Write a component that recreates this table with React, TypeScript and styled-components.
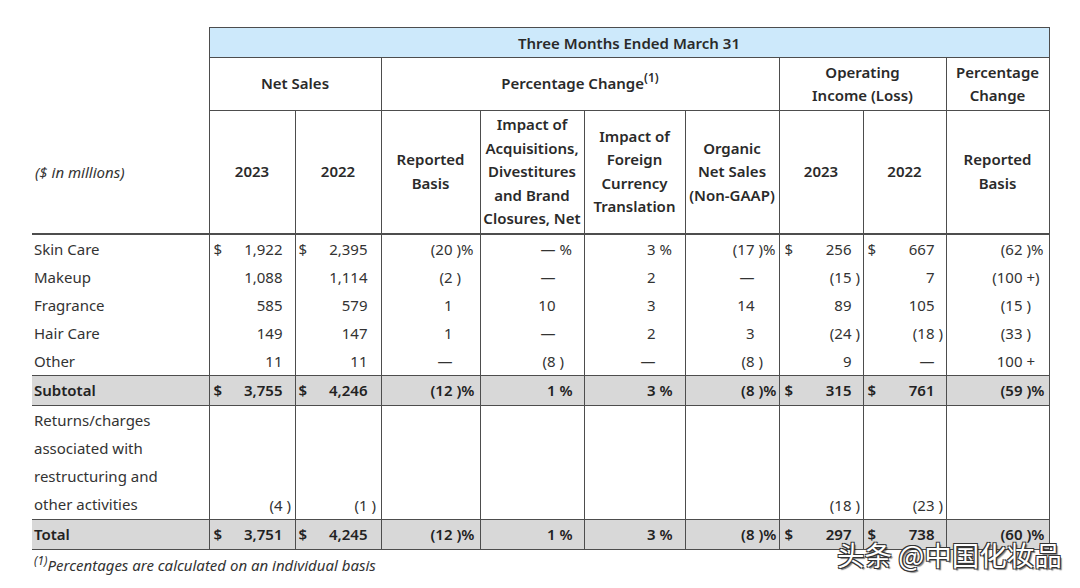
import React from "react";
import styled, { createGlobalStyle, css } from "styled-components";

const GlobalStyle = createGlobalStyle`
  html, body { margin: 0; padding: 0; background: #ffffff; }
  body { font-family: "Noto Sans", "Open Sans", sans-serif; color: #333333; }
`;

const LINE = "#4d4d4d";
const BAND = "#d8d8d8";
const BLUE = "#cde9fb";

const Page = styled.div`
  position: relative;
  width: 1080px;
  height: 588px;
  box-sizing: border-box;
  padding: 27px 0 0 32px;
  overflow: hidden;
`;

const Table = styled.table`
  border-collapse: collapse;
  table-layout: fixed;
  width: 1017px;
  font-size: 15px;
`;

const HeadRow = styled.tr<{ $h: number }>`
  height: ${(p) => p.$h}px;
`;

const BlankHead = styled.td`
  padding: 0;
  border: none;
`;

const UnitsHead = styled.td`
  padding: 0 0 0 3px;
  border: none;
  border-bottom: 2px solid ${LINE};
  font-style: italic;
  vertical-align: middle;
  text-align: left;
`;

const HeadCell = styled.th<{ $blue?: boolean; $last?: boolean }>`
  padding: 0 2px;
  border: 1px solid ${LINE};
  font-weight: 600;
  color: #2a2a2a;
  text-align: center;
  vertical-align: middle;
  line-height: 23.5px;
  ${(p) =>
    p.$blue &&
    css`
      background: ${BLUE};
      line-height: 20px;
    `}
  ${(p) =>
    p.$last &&
    css`
      border-bottom: 2px solid ${LINE};
    `}
`;

const Sup = styled.sup`
  font-size: 12px;
  line-height: 0;
  vertical-align: 7px;
`;

const BodyRow = styled.tr<{ $h: number; $band?: boolean }>`
  height: ${(p) => p.$h}px;
  ${(p) =>
    p.$band &&
    css`
      background: ${BAND};
      font-weight: 600;
      color: #222222;
    `}
`;

const LabelCell = styled.td<{ $band?: boolean }>`
  padding: 0 0 0 2px;
  border: none;
  line-height: 28px;
  vertical-align: middle;
  text-align: left;
  white-space: nowrap;
  ${(p) =>
    p.$band &&
    css`
      border-top: 1px solid ${LINE};
      border-bottom: 1px solid ${LINE};
    `}
`;

const NumTd = styled.td<{ $band?: boolean; $bottom?: boolean }>`
  padding: 0;
  border-left: 1px solid ${LINE};
  border-right: 1px solid ${LINE};
  vertical-align: ${(p) => (p.$bottom ? "bottom" : "middle")};
  ${(p) =>
    p.$band &&
    css`
      border-top: 1px solid ${LINE};
      border-bottom: 1px solid ${LINE};
    `}
`;

const NumBox = styled.div<{ $pl: number; $pr: number }>`
  display: flex;
  align-items: baseline;
  line-height: 28px;
  padding-left: ${(p) => p.$pl}px;
  padding-right: ${(p) => p.$pr}px;
  white-space: pre;
`;

const Dollar = styled.span`
  margin-right: auto;
`;

const Num = styled.span`
  margin-left: auto;
  text-align: right;
`;

const Suffix = styled.span<{ $w: number }>`
  flex: 0 0 ${(p) => p.$w}px;
  width: ${(p) => p.$w}px;
  text-align: left;
`;

const Footnote = styled.div`
  margin: 3px 0 0 2px;
  font-size: 15px;
  font-style: italic;
  color: #333333;
  line-height: 24px;
`;

const FootSup = styled.sup`
  font-size: 12px;
  line-height: 0;
  vertical-align: 6px;
`;

const Watermark = styled.div`
  position: absolute;
  left: 837px;
  top: 536px;
  font-family: "Noto Sans CJK SC", "Noto Sans", sans-serif;
  font-size: 27.5px;
  line-height: 36px;
  color: #ffffff;
  white-space: nowrap;
  text-shadow: 1px 1px 0 #333, -1px -1px 0 #333, 1px -1px 0 #333,
    -1px 1px 0 #333, 2px 2px 1px rgba(0, 0, 0, 0.5);
`;

type Cell = [string, string, string];

const COLS = [
  { sw: 11, pr: 1, pl: 4 },
  { sw: 11, pr: 2, pl: 3 },
  { sw: 22, pr: 5, pl: 4 },
  { sw: 20, pr: 8, pl: 4 },
  { sw: 20, pr: 9, pl: 4 },
  { sw: 22, pr: 2, pl: 4 },
  { sw: 10, pr: 1, pl: 5 },
  { sw: 10, pr: 1, pl: 4 },
  { sw: 22, pr: 4, pl: 4 },
];

const D = "—";

type Row = { label: React.ReactNode; cells: Cell[]; band?: boolean; h: number; bottom?: boolean };

const ROWS: Row[] = [
  {
    label: "Skin Care",
    h: 28,
    cells: [
      ["$", "1,922", ""], ["$", "2,395", ""], ["", "(20", " )%"], ["", D, " %"], ["", "3", " %"],
      ["", "(17", " )%"], ["$", "256", ""], ["$", "667", ""], ["", "(62", " )%"],
    ],
  },
  {
    label: "Makeup",
    h: 28,
    cells: [
      ["", "1,088", ""], ["", "1,114", ""], ["", "(2", " )"], ["", D, ""], ["", "2", ""],
      ["", D, ""], ["", "(15", " )"], ["", "7", ""], ["", "(100", " +)"],
    ],
  },
  {
    label: "Fragrance",
    h: 28,
    cells: [
      ["", "585", ""], ["", "579", ""], ["", "1", ""], ["", "10", ""], ["", "3", ""],
      ["", "14", ""], ["", "89", ""], ["", "105", ""], ["", "(15", " )"],
    ],
  },
  {
    label: "Hair Care",
    h: 28,
    cells: [
      ["", "149", ""], ["", "147", ""], ["", "1", ""], ["", D, ""], ["", "2", ""],
      ["", "3", ""], ["", "(24", " )"], ["", "(18", " )"], ["", "(33", " )"],
    ],
  },
  {
    label: "Other",
    h: 28,
    cells: [
      ["", "11", ""], ["", "11", ""], ["", D, ""], ["", "(8", " )"], ["", D, ""],
      ["", "(8", " )"], ["", "9", ""], ["", D, ""], ["", "100", " +"],
    ],
  },
  {
    label: "Subtotal",
    h: 30,
    band: true,
    cells: [
      ["$", "3,755", ""], ["$", "4,246", ""], ["", "(12", " )%"], ["", "1", " %"], ["", "3", " %"],
      ["", "(8", " )%"], ["$", "315", ""], ["$", "761", ""], ["", "(59", " )%"],
    ],
  },
  {
    label: (
      <>
        Returns/charges
        <br />
        associated with
        <br />
        restructuring and
        <br />
        other activities
      </>
    ),
    h: 114,
    bottom: true,
    cells: [
      ["", "(4", " )"], ["", "(1", " )"], ["", "", ""], ["", "", ""], ["", "", ""],
      ["", "", ""], ["", "(18", " )"], ["", "(23", " )"], ["", "", ""],
    ],
  },
  {
    label: "Total",
    h: 30,
    band: true,
    cells: [
      ["$", "3,751", ""], ["$", "4,245", ""], ["", "(12", " )%"], ["", "1", " %"], ["", "3", " %"],
      ["", "(8", " )%"], ["$", "297", ""], ["$", "738", ""], ["", "(60", " )%"],
    ],
  },
];

const WIDTHS = [177, 86, 86, 99, 104, 101, 94, 84, 83, 103];

function NumberCell({ cell, idx, band, bottom }: { cell: Cell; idx: number; band?: boolean; bottom?: boolean }) {
  const c = COLS[idx];
  const [dollar, num, suffix] = cell;
  return (
    <NumTd $band={band} $bottom={bottom}>
      <NumBox $pl={c.pl} $pr={c.pr}>
        {dollar && <Dollar>{dollar}</Dollar>}
        <Num>{num}</Num>
        <Suffix $w={c.sw}>{suffix}</Suffix>
      </NumBox>
    </NumTd>
  );
}

export default function App() {
  return (
    <>
      <GlobalStyle />
      <Page>
        <Table>
          <colgroup>
            {WIDTHS.map((w, i) => (
              <col key={i} style={{ width: w }} />
            ))}
          </colgroup>
          <thead>
            <HeadRow $h={30}>
              <BlankHead />
              <HeadCell $blue colSpan={9}>
                Three Months Ended March 31
              </HeadCell>
            </HeadRow>
            <HeadRow $h={53}>
              <BlankHead />
              <HeadCell colSpan={2}>Net Sales</HeadCell>
              <HeadCell colSpan={4}>
                Percentage Change<Sup>(1)</Sup>
              </HeadCell>
              <HeadCell colSpan={2}>
                Operating
                <br />
                Income (Loss)
              </HeadCell>
              <HeadCell>
                Percentage
                <br />
                Change
              </HeadCell>
            </HeadRow>
            <HeadRow $h={123}>
              <UnitsHead>($ in millions)</UnitsHead>
              <HeadCell $last>2023</HeadCell>
              <HeadCell $last>2022</HeadCell>
              <HeadCell $last>
                Reported
                <br />
                Basis
              </HeadCell>
              <HeadCell $last>
                Impact of
                <br />
                Acquisitions,
                <br />
                Divestitures
                <br />
                and Brand
                <br />
                Closures, Net
              </HeadCell>
              <HeadCell $last>
                Impact of
                <br />
                Foreign
                <br />
                Currency
                <br />
                Translation
              </HeadCell>
              <HeadCell $last>
                Organic
                <br />
                Net Sales
                <br />
                (Non-GAAP)
              </HeadCell>
              <HeadCell $last>2023</HeadCell>
              <HeadCell $last>2022</HeadCell>
              <HeadCell $last>
                Reported
                <br />
                Basis
              </HeadCell>
            </HeadRow>
          </thead>
          <tbody>
            {ROWS.map((r, ri) => (
              <BodyRow key={ri} $h={r.h} $band={r.band}>
                <LabelCell $band={r.band}>{r.label}</LabelCell>
                {r.cells.map((c, ci) => (
                  <NumberCell key={ci} cell={c} idx={ci} band={r.band} bottom={r.bottom} />
                ))}
              </BodyRow>
            ))}
          </tbody>
        </Table>
        <Footnote>
          <FootSup>(1)</FootSup>Percentages are calculated on an individual basis
        </Footnote>
        <Watermark>头条 @中国化妆品</Watermark>
      </Page>
    </>
  );
}
